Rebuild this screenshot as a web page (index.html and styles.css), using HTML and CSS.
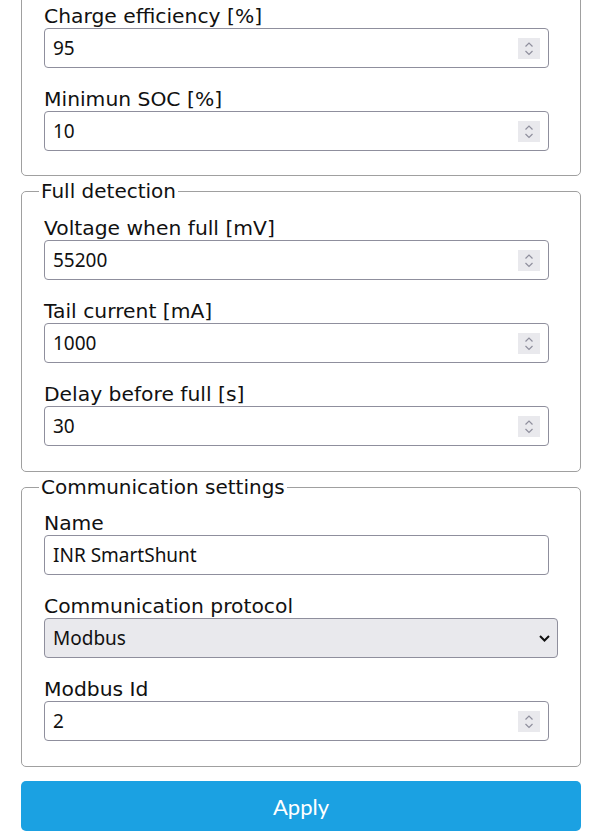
FILE: index.html
```html
<!DOCTYPE html>
<html lang="en">
<head>
  <meta charset="UTF-8">
  <title>SmartShunt settings</title>
  <meta name="viewport" content="width=device-width, initial-scale=1.0">
  <link rel="stylesheet" href="styles.css">
</head>
<body>
  <form class="settings" onsubmit="return false">
    <fieldset class="group cut">
      <div class="field">
        <label for="chargeEff">Charge efficiency [%]</label>
        <div class="box">
          <input type="text" id="chargeEff" inputmode="numeric" value="95">
          <svg class="spin" width="22" height="21" viewBox="0 0 22 21"><rect width="22" height="21" fill="#e9e9ed"/><path d="M7.5 8.5 11 5l3.5 3.5M7.5 13l3.5 3.5 3.5-3.5" fill="none" stroke="#8f8f9d" stroke-width="1.2"/></svg>
        </div>
      </div>
      <div class="field">
        <label for="minSoc">Minimun SOC [%]</label>
        <div class="box">
          <input type="text" id="minSoc" inputmode="numeric" value="10">
          <svg class="spin" width="22" height="21" viewBox="0 0 22 21"><rect width="22" height="21" fill="#e9e9ed"/><path d="M7.5 8.5 11 5l3.5 3.5M7.5 13l3.5 3.5 3.5-3.5" fill="none" stroke="#8f8f9d" stroke-width="1.2"/></svg>
        </div>
      </div>
    </fieldset>

    <fieldset class="group">
      <legend>Full detection</legend>
      <div class="field">
        <label for="fullVoltage">Voltage when full [mV]</label>
        <div class="box">
          <input type="text" id="fullVoltage" inputmode="numeric" value="55200">
          <svg class="spin" width="22" height="21" viewBox="0 0 22 21"><rect width="22" height="21" fill="#e9e9ed"/><path d="M7.5 8.5 11 5l3.5 3.5M7.5 13l3.5 3.5 3.5-3.5" fill="none" stroke="#8f8f9d" stroke-width="1.2"/></svg>
        </div>
      </div>
      <div class="field">
        <label for="tailCurrent">Tail current [mA]</label>
        <div class="box">
          <input type="text" id="tailCurrent" inputmode="numeric" value="1000">
          <svg class="spin" width="22" height="21" viewBox="0 0 22 21"><rect width="22" height="21" fill="#e9e9ed"/><path d="M7.5 8.5 11 5l3.5 3.5M7.5 13l3.5 3.5 3.5-3.5" fill="none" stroke="#8f8f9d" stroke-width="1.2"/></svg>
        </div>
      </div>
      <div class="field">
        <label for="fullDelay">Delay before full [s]</label>
        <div class="box">
          <input type="text" id="fullDelay" inputmode="numeric" value="30">
          <svg class="spin" width="22" height="21" viewBox="0 0 22 21"><rect width="22" height="21" fill="#e9e9ed"/><path d="M7.5 8.5 11 5l3.5 3.5M7.5 13l3.5 3.5 3.5-3.5" fill="none" stroke="#8f8f9d" stroke-width="1.2"/></svg>
        </div>
      </div>
    </fieldset>

    <fieldset class="group comms">
      <legend>Communication settings</legend>
      <div class="field">
        <label for="devName">Name</label>
        <div class="box">
          <input type="text" id="devName" value="INR SmartShunt">
        </div>
      </div>
      <div class="field">
        <label for="protocol">Communication protocol</label>
        <div class="box select-box">
          <select id="protocol">
            <option selected>Modbus</option>
            <option>VE.Direct</option>
          </select>
          <svg class="caret" width="11" height="7" viewBox="0 0 11 7"><path d="M1 1l4.5 4.5L10 1" fill="none" stroke="#111" stroke-width="2"/></svg>
        </div>
      </div>
      <div class="field">
        <label for="modbusId">Modbus Id</label>
        <div class="box">
          <input type="text" id="modbusId" inputmode="numeric" value="2">
          <svg class="spin" width="22" height="21" viewBox="0 0 22 21"><rect width="22" height="21" fill="#e9e9ed"/><path d="M7.5 8.5 11 5l3.5 3.5M7.5 13l3.5 3.5 3.5-3.5" fill="none" stroke="#8f8f9d" stroke-width="1.2"/></svg>
        </div>
      </div>
    </fieldset>

    <button class="apply" type="submit">Apply</button>
  </form>
</body>
</html>
```

FILE: styles.css
```css
html, body { margin: 0; background: #fff; }
body { color: #111; font-family: "DejaVu Sans", Verdana, sans-serif; font-size: 20px; }
.settings { width: 560px; margin-left: 21px; }

.group { margin: 0 0 4px; padding: 14px 22px 25px; border: 1px solid #a0a0a0; border-radius: 5px; }
.group.cut { margin-top: -15px; padding-top: 19px; padding-bottom: 24px; }
.group.comms { padding-top: 13px; }
.group legend { font-size: 20px; line-height: 23px; padding: 0 2px; margin-left: -5px; }

.field + .field { margin-top: 20px; }
.field label { display: block; line-height: 23px; font-size: 20.3px; }

.box { display: flex; align-items: center; box-sizing: border-box; width: calc(100% - 9px); height: 40px; padding: 0 8px; border: 1px solid #8f8f9d; border-radius: 4px; background: #fff; }
.box input, .box select { flex: 1; min-width: 0; border: 0; padding: 0; margin: 0; outline: none; background: transparent; color: #111; font-family: "Noto Sans", "Open Sans", sans-serif; font-size: 19px; }
.box .spin { flex: none; }

.select-box { width: 100%; background: #e9e9ed; padding-right: 7px; }
.select-box select { appearance: none; -webkit-appearance: none; height: 38px; }
.select-box .caret { flex: none; }

.apply { display: block; width: 100%; height: 50px; margin-top: 14px; border: 0; border-radius: 5px; background: #1ba1e2; color: #fff; font-family: Lato, sans-serif; font-size: 22px; }
```
